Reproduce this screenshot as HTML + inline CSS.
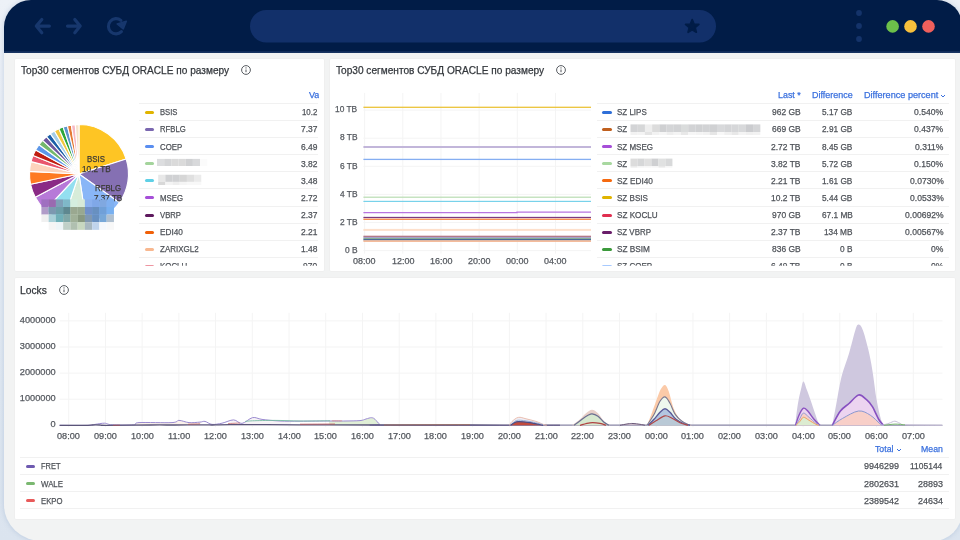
<!DOCTYPE html>
<html><head><meta charset="utf-8">
<style>
*{margin:0;padding:0;box-sizing:border-box}
html,body{width:960px;height:540px;overflow:hidden}
body{position:relative;filter:blur(0.3px);font-family:"Liberation Sans", sans-serif;background:linear-gradient(180deg,#edf1f7 0%,#e3eaf3 45%,#dbe4ef 100%)}
.a{position:absolute}
.frame{position:absolute;left:4px;top:0;width:958px;height:541px;border-radius:27px 25px 29px 38px / 27px 25px 29px 36px;background:#f2f3f3;overflow:hidden;box-shadow:0 0 5px rgba(120,150,190,0.35)}
.bar{position:absolute;left:0;top:0;width:100%;height:53px;background:#011c47}
.panel{position:absolute;background:#fff;border-radius:1px;box-shadow:0 0 0 0.5px #ebecec}
.t{position:absolute;white-space:nowrap;line-height:1;-webkit-text-stroke:0.25px currentColor}
.sep{position:absolute;height:1px;background:#f1f1f1}
.sw{position:absolute;height:3px;border-radius:1.5px}
</style></head><body>
<div class="frame"><div class="bar"></div><div class="a" style="left:0;top:50.5px;width:100%;height:2.5px;background:linear-gradient(180deg,#0e2856,#1b3764)"></div></div>

<svg class="a" style="left:0;top:0" width="960" height="60" viewBox="0 0 960 60">
<g stroke="#17376d" stroke-width="3.2" fill="none" stroke-linecap="round" stroke-linejoin="round">
<path d="M49.4 26.1 H36.5 M41.8 19.5 L36.3 26.1 L41.8 32.7"/>
<path d="M67.5 26.1 H80 M74.8 19.5 L80.2 26.1 L74.8 32.7"/>
<path d="M120.9 20.4 A7.6 7.6 0 1 0 121.4 31.6" stroke-width="3.1"/>
</g>
<path d="M117.2 23.9 L126.3 21.2 L123.3 28.8 Z" fill="#17376d" stroke="#17376d" stroke-width="1.6" stroke-linejoin="round"/>
<rect x="250" y="10" width="466" height="32.5" rx="16.25" fill="#12306a"/>
<path d="M692.20 19.60 L694.02 24.09 L698.86 24.44 L695.15 27.56 L696.31 32.26 L692.20 29.70 L688.09 32.26 L689.25 27.56 L685.54 24.44 L690.38 24.09 Z" fill="#011c47" stroke="#011c47" stroke-width="1.7" stroke-linejoin="round"/>
<circle cx="859" cy="13" r="2.9" fill="#14336a"/>
<circle cx="859" cy="26" r="2.9" fill="#14336a"/>
<circle cx="859" cy="39" r="2.9" fill="#14336a"/>
<circle cx="892.6" cy="26.4" r="6.3" fill="#6cc04a"/>
<circle cx="910.5" cy="26.4" r="6.3" fill="#f8c03c"/>
<circle cx="928.5" cy="26.4" r="6.3" fill="#ef5f5c"/>
</svg>

<div class="panel" style="left:14.5px;top:58.6px;width:309.70px;height:212.60px"></div>
<div class="panel" style="left:329.8px;top:58.6px;width:625.00px;height:212.60px"></div>
<div class="panel" style="left:14.5px;top:277.7px;width:940.30px;height:241.10px"></div>
<div class="t" style="left:20.80px;top:65px;font-size:10.6px;color:#33373c;transform:scaleX(0.9544);transform-origin:0 0;">Top30 сегментов СУБД ORACLE по размеру</div>
<svg class="a" style="left:239.9px;top:63.900000000000006px" width="12" height="12" viewBox="-6 -6 12 12">
<circle cx="0" cy="0" r="4.4" fill="none" stroke="#50545a" stroke-width="0.95"/>
<rect x="-0.5" y="-0.5" width="1" height="2.7" fill="#50545a"/><rect x="-0.55" y="-2.65" width="1.1" height="1.1" rx="0.5" fill="#50545a"/></svg>
<div class="t" style="left:336.00px;top:65px;font-size:10.6px;color:#33373c;transform:scaleX(0.9544);transform-origin:0 0;">Top30 сегментов СУБД ORACLE по размеру</div>
<svg class="a" style="left:555.0px;top:63.900000000000006px" width="12" height="12" viewBox="-6 -6 12 12">
<circle cx="0" cy="0" r="4.4" fill="none" stroke="#50545a" stroke-width="0.95"/>
<rect x="-0.5" y="-0.5" width="1" height="2.7" fill="#50545a"/><rect x="-0.55" y="-2.65" width="1.1" height="1.1" rx="0.5" fill="#50545a"/></svg>
<div class="t" style="left:20.40px;top:285px;font-size:10.6px;color:#33373c;transform:scaleX(0.9687);transform-origin:0 0;">Locks</div>
<svg class="a" style="left:57.6px;top:284.0px" width="12" height="12" viewBox="-6 -6 12 12">
<circle cx="0" cy="0" r="4.4" fill="none" stroke="#50545a" stroke-width="0.95"/>
<rect x="-0.5" y="-0.5" width="1" height="2.7" fill="#50545a"/><rect x="-0.55" y="-2.65" width="1.1" height="1.1" rx="0.5" fill="#50545a"/></svg>
<svg class="a" style="left:0;top:0" width="330" height="280" viewBox="0 0 330 280">
<path d="M79.0 174.0 L79.00 124.50 A49.5 49.5 0 0 1 126.18 159.03 Z" fill="#fec524" stroke="#fff" stroke-width="1.1" stroke-linejoin="round"/>
<path d="M79.0 174.0 L126.18 159.03 A49.5 49.5 0 0 1 119.40 202.60 Z" fill="#8570b3" stroke="#fff" stroke-width="1.1" stroke-linejoin="round"/>
<path d="M79.0 174.0 L119.40 202.60 A49.5 49.5 0 0 1 86.32 222.96 Z" fill="#89b6f7" stroke="#fff" stroke-width="1.1" stroke-linejoin="round"/>
<path d="M79.0 174.0 L86.32 222.96 A49.5 49.5 0 0 1 63.29 220.94 Z" fill="#d7ecd9" stroke="#fff" stroke-width="1.1" stroke-linejoin="round"/>
<path d="M79.0 174.0 L63.29 220.94 A49.5 49.5 0 0 1 45.24 210.20 Z" fill="#93dff0" stroke="#fff" stroke-width="1.1" stroke-linejoin="round"/>
<path d="M79.0 174.0 L45.24 210.20 A49.5 49.5 0 0 1 35.29 197.24 Z" fill="#b779d8" stroke="#fff" stroke-width="1.1" stroke-linejoin="round"/>
<path d="M79.0 174.0 L35.29 197.24 A49.5 49.5 0 0 1 30.58 184.29 Z" fill="#8a2a86" stroke="#fff" stroke-width="1.1" stroke-linejoin="round"/>
<path d="M79.0 174.0 L30.58 184.29 A49.5 49.5 0 0 1 29.57 171.41 Z" fill="#fe7a22" stroke="#fff" stroke-width="1.1" stroke-linejoin="round"/>
<path d="M79.0 174.0 L29.57 171.41 A49.5 49.5 0 0 1 31.08 161.61 Z" fill="#fdd3bd" stroke="#fff" stroke-width="1.1" stroke-linejoin="round"/>
<path d="M79.0 174.0 L31.08 161.61 A49.5 49.5 0 0 1 33.06 155.58 Z" fill="#e9556d" stroke="#fff" stroke-width="1.1" stroke-linejoin="round"/>
<path d="M79.0 174.0 L33.06 155.58 A49.5 49.5 0 0 1 35.73 149.96 Z" fill="#c01d10" stroke="#fff" stroke-width="1.1" stroke-linejoin="round"/>
<path d="M79.0 174.0 L35.73 149.96 A49.5 49.5 0 0 1 39.03 144.80 Z" fill="#5d97e8" stroke="#fff" stroke-width="1.1" stroke-linejoin="round"/>
<path d="M79.0 174.0 L39.03 144.80 A49.5 49.5 0 0 1 42.65 140.40 Z" fill="#74b86c" stroke="#fff" stroke-width="1.1" stroke-linejoin="round"/>
<path d="M79.0 174.0 L42.65 140.40 A49.5 49.5 0 0 1 46.43 136.73 Z" fill="#6e579e" stroke="#fff" stroke-width="1.1" stroke-linejoin="round"/>
<path d="M79.0 174.0 L46.43 136.73 A49.5 49.5 0 0 1 50.29 133.68 Z" fill="#1b5fa8" stroke="#fff" stroke-width="1.1" stroke-linejoin="round"/>
<path d="M79.0 174.0 L50.29 133.68 A49.5 49.5 0 0 1 54.51 130.98 Z" fill="#a3cde8" stroke="#fff" stroke-width="1.1" stroke-linejoin="round"/>
<path d="M79.0 174.0 L54.51 130.98 A49.5 49.5 0 0 1 58.91 128.76 Z" fill="#f2c73f" stroke="#fff" stroke-width="1.1" stroke-linejoin="round"/>
<path d="M79.0 174.0 L58.91 128.76 A49.5 49.5 0 0 1 63.17 127.10 Z" fill="#2ea63b" stroke="#fff" stroke-width="1.1" stroke-linejoin="round"/>
<path d="M79.0 174.0 L63.17 127.10 A49.5 49.5 0 0 1 67.40 125.88 Z" fill="#5c95cc" stroke="#fff" stroke-width="1.1" stroke-linejoin="round"/>
<path d="M79.0 174.0 L67.40 125.88 A49.5 49.5 0 0 1 71.38 125.09 Z" fill="#e57a35" stroke="#fff" stroke-width="1.1" stroke-linejoin="round"/>
<path d="M79.0 174.0 L71.38 125.09 A49.5 49.5 0 0 1 75.29 124.64 Z" fill="#f7b8c4" stroke="#fff" stroke-width="1.1" stroke-linejoin="round"/>
<path d="M79.0 174.0 L75.29 124.64 A49.5 49.5 0 0 1 79.00 124.50 Z" fill="#f7e3cc" stroke="#fff" stroke-width="1.1" stroke-linejoin="round"/>
</svg>
<div class="t" style="left:87.30px;top:155px;font-size:8.8px;color:#3b3a36;transform:scaleX(0.8921);transform-origin:0 0;">BSIS</div>
<div class="t" style="left:82.30px;top:165px;font-size:8.8px;color:#3b3a36;transform:scaleX(0.9358);transform-origin:0 0;">10.2 TB</div>
<div class="t" style="left:94.70px;top:184px;font-size:8.8px;color:#3b3a36;transform:scaleX(0.8859);transform-origin:0 0;">RFBLG</div>
<div class="t" style="left:93.50px;top:194px;font-size:8.8px;color:#3b3a36;transform:scaleX(0.9228);transform-origin:0 0;">7.37 TB</div>
<svg class="a" style="left:0;top:0" width="330" height="280" viewBox="0 0 330 280">
<rect x="41.40" y="199.40" width="7.30" height="7.65" fill="#9f70c0"/>
<rect x="48.65" y="199.40" width="7.30" height="7.65" fill="#9a6ab0"/>
<rect x="55.90" y="199.40" width="7.30" height="7.65" fill="#7fa0b8"/>
<rect x="63.15" y="199.40" width="7.30" height="7.65" fill="#7fb8c8"/>
<rect x="70.40" y="199.40" width="7.30" height="7.65" fill="#d5eedf"/>
<rect x="77.65" y="199.40" width="7.30" height="7.65" fill="#d8ead8"/>
<rect x="84.90" y="199.40" width="7.30" height="7.65" fill="#8ab0ee"/>
<rect x="92.15" y="199.40" width="7.30" height="7.65" fill="#80a8e8"/>
<rect x="99.40" y="199.40" width="7.30" height="7.65" fill="#80a8e0"/>
<rect x="106.65" y="199.40" width="7.30" height="7.65" fill="#80b0f0"/>
<rect x="41.40" y="207.00" width="7.30" height="7.65" fill="#b09cc8"/>
<rect x="48.65" y="207.00" width="7.30" height="7.65" fill="#7c98b0"/>
<rect x="55.90" y="207.00" width="7.30" height="7.65" fill="#6c9ea8"/>
<rect x="63.15" y="207.00" width="7.30" height="7.65" fill="#5e8890"/>
<rect x="70.40" y="207.00" width="7.30" height="7.65" fill="#9aa890"/>
<rect x="77.65" y="207.00" width="7.30" height="7.65" fill="#98a890"/>
<rect x="84.90" y="207.00" width="7.30" height="7.65" fill="#7090c8"/>
<rect x="92.15" y="207.00" width="7.30" height="7.65" fill="#6890c0"/>
<rect x="99.40" y="207.00" width="7.30" height="7.65" fill="#70a0d8"/>
<rect x="106.65" y="207.00" width="7.30" height="7.65" fill="#78b0f0"/>
<rect x="41.40" y="214.60" width="7.30" height="7.65" fill="#f0f0f0"/>
<rect x="48.65" y="214.60" width="7.30" height="7.65" fill="#a8d0d8"/>
<rect x="55.90" y="214.60" width="7.30" height="7.65" fill="#70b0b8"/>
<rect x="63.15" y="214.60" width="7.30" height="7.65" fill="#80a8a8"/>
<rect x="70.40" y="214.60" width="7.30" height="7.65" fill="#a0b098"/>
<rect x="77.65" y="214.60" width="7.30" height="7.65" fill="#889880"/>
<rect x="84.90" y="214.60" width="7.30" height="7.65" fill="#8098b0"/>
<rect x="92.15" y="214.60" width="7.30" height="7.65" fill="#6890c0"/>
<rect x="99.40" y="214.60" width="7.30" height="7.65" fill="#78a8d8"/>
<rect x="106.65" y="214.60" width="7.30" height="7.65" fill="#b0c0d0"/>
<rect x="41.40" y="222.20" width="7.30" height="7.65" fill="#ffffff"/>
<rect x="48.65" y="222.20" width="7.30" height="7.65" fill="#f5f5f5"/>
<rect x="55.90" y="222.20" width="7.30" height="7.65" fill="#eef5f8"/>
<rect x="63.15" y="222.20" width="7.30" height="7.65" fill="#c0d0c8"/>
<rect x="70.40" y="222.20" width="7.30" height="7.65" fill="#b0c0b0"/>
<rect x="77.65" y="222.20" width="7.30" height="7.65" fill="#c8d8c0"/>
<rect x="84.90" y="222.20" width="7.30" height="7.65" fill="#a8b8c0"/>
<rect x="92.15" y="222.20" width="7.30" height="7.65" fill="#c0d4ec"/>
<rect x="99.40" y="222.20" width="7.30" height="7.65" fill="#f5f8fc"/>
<rect x="106.65" y="222.20" width="7.30" height="7.65" fill="#f8f8f8"/>
</svg>
<div class="a" style="left:0;top:0;width:960px;height:540px;clip-path:inset(85px 641px 274.2px 139px)">
<div class="t" style="left:308.90px;top:91px;font-size:9.0px;color:#3a70de;">Value</div>
<div class="sep" style="left:139.4px;top:102.90px;width:178.60px"></div>
<div class="sep" style="left:139.4px;top:120.00px;width:178.60px"></div>
<div class="sep" style="left:139.4px;top:137.10px;width:178.60px"></div>
<div class="sep" style="left:139.4px;top:154.20px;width:178.60px"></div>
<div class="sep" style="left:139.4px;top:171.30px;width:178.60px"></div>
<div class="sep" style="left:139.4px;top:188.40px;width:178.60px"></div>
<div class="sep" style="left:139.4px;top:205.50px;width:178.60px"></div>
<div class="sep" style="left:139.4px;top:222.60px;width:178.60px"></div>
<div class="sep" style="left:139.4px;top:239.70px;width:178.60px"></div>
<div class="sep" style="left:139.4px;top:256.80px;width:178.60px"></div>
<div class="sw" style="left:145px;top:110.95px;width:9px;background:#e0b400"></div>
<div class="t" style="left:159.80px;top:108px;font-size:9.2px;color:#4e5258;transform:scaleX(0.8343);transform-origin:0 0;">BSIS</div>
<div class="t" style="left:301.90px;top:108px;font-size:9.2px;color:#4e5258;transform:scaleX(0.8550);transform-origin:0 0;">10.2</div>
<div class="sw" style="left:145px;top:128.05px;width:9px;background:#7b68b0"></div>
<div class="t" style="left:159.80px;top:125px;font-size:9.2px;color:#4e5258;transform:scaleX(0.8376);transform-origin:0 0;">RFBLG</div>
<div class="t" style="left:300.74px;top:125px;font-size:9.2px;color:#4e5258;transform:scaleX(0.9200);transform-origin:0 0;">7.37</div>
<div class="sw" style="left:145px;top:145.15px;width:9px;background:#5a8ef0"></div>
<div class="t" style="left:159.80px;top:143px;font-size:9.2px;color:#4e5258;transform:scaleX(0.8512);transform-origin:0 0;">COEP</div>
<div class="t" style="left:300.74px;top:143px;font-size:9.2px;color:#4e5258;transform:scaleX(0.9200);transform-origin:0 0;">6.49</div>
<div class="sw" style="left:145px;top:162.25px;width:9px;background:#a4d49c"></div>
<svg class="a" style="left:0;top:0" width="960" height="540"><rect x="157.00" y="158.90" width="7.22" height="7.1" fill="#dcdddf"/><rect x="164.17" y="158.90" width="7.22" height="7.1" fill="#d4d5d7"/><rect x="171.34" y="158.90" width="7.22" height="7.1" fill="#dadada"/><rect x="178.51" y="158.90" width="7.22" height="7.1" fill="#dadada"/><rect x="185.68" y="158.90" width="7.22" height="7.1" fill="#cfd0d2"/><rect x="192.85" y="158.90" width="7.22" height="7.1" fill="#d8d9db"/><rect x="200.02" y="158.90" width="7.22" height="7.1" fill="#fbfbfb"/></svg>
<div class="t" style="left:300.74px;top:160px;font-size:9.2px;color:#4e5258;transform:scaleX(0.9200);transform-origin:0 0;">3.82</div>
<div class="sw" style="left:145px;top:179.35px;width:9px;background:#5fd0e6"></div>
<svg class="a" style="left:0;top:0" width="960" height="540"><rect x="158.20" y="174.75" width="7.22" height="7.15" fill="#e8e8e8"/><rect x="165.37" y="174.75" width="7.22" height="7.15" fill="#d0d1d3"/><rect x="172.54" y="174.75" width="7.22" height="7.15" fill="#d0d1d3"/><rect x="179.71" y="174.75" width="7.22" height="7.15" fill="#d6d6d6"/><rect x="186.88" y="174.75" width="7.22" height="7.15" fill="#e0e0e0"/><rect x="194.05" y="174.75" width="7.22" height="7.15" fill="#ebebeb"/><rect x="158.20" y="181.90" width="7.22" height="3.1" fill="#d8d8d8"/><rect x="165.37" y="181.90" width="7.22" height="3.1" fill="#f4f4f4"/><rect x="172.54" y="181.90" width="7.22" height="3.1" fill="#eeeeee"/><rect x="179.71" y="181.90" width="7.22" height="3.1" fill="#f5f5f5"/><rect x="186.88" y="181.90" width="7.22" height="3.1" fill="#f8f8f8"/><rect x="194.05" y="181.90" width="7.22" height="3.1" fill="#f8f8f8"/></svg>
<div class="t" style="left:300.74px;top:177px;font-size:9.2px;color:#4e5258;transform:scaleX(0.9200);transform-origin:0 0;">3.48</div>
<div class="sw" style="left:145px;top:196.45px;width:9px;background:#a64fd8"></div>
<div class="t" style="left:159.80px;top:194px;font-size:9.2px;color:#4e5258;transform:scaleX(0.8489);transform-origin:0 0;">MSEG</div>
<div class="t" style="left:300.74px;top:194px;font-size:9.2px;color:#4e5258;transform:scaleX(0.9200);transform-origin:0 0;">2.72</div>
<div class="sw" style="left:145px;top:213.55px;width:9px;background:#5e1a5e"></div>
<div class="t" style="left:159.80px;top:211px;font-size:9.2px;color:#4e5258;transform:scaleX(0.8377);transform-origin:0 0;">VBRP</div>
<div class="t" style="left:300.74px;top:211px;font-size:9.2px;color:#4e5258;transform:scaleX(0.9200);transform-origin:0 0;">2.37</div>
<div class="sw" style="left:145px;top:230.65px;width:9px;background:#f06008"></div>
<div class="t" style="left:159.80px;top:228px;font-size:9.2px;color:#4e5258;transform:scaleX(0.8993);transform-origin:0 0;">EDI40</div>
<div class="t" style="left:300.74px;top:228px;font-size:9.2px;color:#4e5258;transform:scaleX(0.9200);transform-origin:0 0;">2.21</div>
<div class="sw" style="left:145px;top:247.75px;width:9px;background:#f8b890"></div>
<div class="t" style="left:159.80px;top:245px;font-size:9.2px;color:#4e5258;transform:scaleX(0.8700);transform-origin:0 0;">ZARIXGL2</div>
<div class="t" style="left:300.74px;top:245px;font-size:9.2px;color:#4e5258;transform:scaleX(0.9200);transform-origin:0 0;">1.48</div>
<div class="sw" style="left:145px;top:264.85px;width:9px;background:#e87080"></div>
<div class="t" style="left:159.80px;top:262px;font-size:9.2px;color:#4e5258;transform:scaleX(0.8600);transform-origin:0 0;">KOCLU</div>
<div class="t" style="left:303.07px;top:262px;font-size:9.2px;color:#4e5258;transform:scaleX(0.9200);transform-origin:0 0;">970</div>
</div>
<svg class="a" style="left:0;top:0" width="960" height="540" viewBox="0 0 960 540">
<rect x="363.4" y="250.10" width="227.6" height="1" fill="#f4f4f4"/>
<rect x="363.4" y="222.00" width="227.6" height="1" fill="#f4f4f4"/>
<rect x="363.4" y="193.90" width="227.6" height="1" fill="#f4f4f4"/>
<rect x="363.4" y="165.80" width="227.6" height="1" fill="#f4f4f4"/>
<rect x="363.4" y="137.70" width="227.6" height="1" fill="#f4f4f4"/>
<rect x="363.4" y="109.60" width="227.6" height="1" fill="#f4f4f4"/>
<rect x="364.10" y="92.9" width="1" height="160.70" fill="#f4f4f4"/>
<rect x="402.28" y="92.9" width="1" height="160.70" fill="#f4f4f4"/>
<rect x="440.46" y="92.9" width="1" height="160.70" fill="#f4f4f4"/>
<rect x="478.64" y="92.9" width="1" height="160.70" fill="#f4f4f4"/>
<rect x="516.82" y="92.9" width="1" height="160.70" fill="#f4f4f4"/>
<rect x="555.00" y="92.9" width="1" height="160.70" fill="#f4f4f4"/>
<rect x="363.4" y="106.65" width="227.6" height="1.3" fill="#ecc43a"/>
<rect x="363.4" y="146.10" width="227.6" height="1.8" fill="#bcaed6"/>
<rect x="363.4" y="158.75" width="227.6" height="1.3" fill="#85aef2"/>
<rect x="363.4" y="196.60" width="227.6" height="1.2" fill="#b9dcb2"/>
<rect x="363.4" y="200.80" width="227.6" height="1.2" fill="#78d2ea"/>
<rect x="363.4" y="216.85" width="227.6" height="1.3" fill="#7c3a80"/>
<rect x="363.4" y="218.65" width="227.6" height="1.3" fill="#f78a48"/>
<rect x="363.4" y="228.90" width="227.6" height="2.0" fill="#fde0cc"/>
<rect x="363.4" y="235.70" width="227.6" height="1.4" fill="#b37684"/>
<rect x="363.4" y="236.95" width="227.6" height="1.3" fill="#aaa2cc"/>
<rect x="363.4" y="237.95" width="227.6" height="1.3" fill="#8bb394"/>
<rect x="363.4" y="238.95" width="227.6" height="1.5" fill="#4c6a9a"/>
<rect x="363.4" y="240.30" width="227.6" height="1.6" fill="#f3b592"/>
<path d="M363.4 212.7 H517 V212.2 H591" stroke="#b874e0" stroke-width="1.3" fill="none"/>
</svg>
<div class="t" style="left:335.15px;top:105px;font-size:8.8px;color:#55595f;transform:scaleX(0.9500);transform-origin:0 0;">10 TB</div>
<div class="t" style="left:339.79px;top:133px;font-size:8.8px;color:#55595f;transform:scaleX(0.9500);transform-origin:0 0;">8 TB</div>
<div class="t" style="left:339.79px;top:162px;font-size:8.8px;color:#55595f;transform:scaleX(0.9500);transform-origin:0 0;">6 TB</div>
<div class="t" style="left:339.79px;top:190px;font-size:8.8px;color:#55595f;transform:scaleX(0.9500);transform-origin:0 0;">4 TB</div>
<div class="t" style="left:339.79px;top:218px;font-size:8.8px;color:#55595f;transform:scaleX(0.9500);transform-origin:0 0;">2 TB</div>
<div class="t" style="left:344.76px;top:246px;font-size:8.8px;color:#55595f;transform:scaleX(0.9500);transform-origin:0 0;">0 B</div>
<div class="t" style="left:353.36px;top:257px;font-size:8.8px;color:#55595f;transform:scaleX(1.0200);transform-origin:0 0;">08:00</div>
<div class="t" style="left:391.54px;top:257px;font-size:8.8px;color:#55595f;transform:scaleX(1.0200);transform-origin:0 0;">12:00</div>
<div class="t" style="left:429.72px;top:257px;font-size:8.8px;color:#55595f;transform:scaleX(1.0200);transform-origin:0 0;">16:00</div>
<div class="t" style="left:467.90px;top:257px;font-size:8.8px;color:#55595f;transform:scaleX(1.0200);transform-origin:0 0;">20:00</div>
<div class="t" style="left:506.08px;top:257px;font-size:8.8px;color:#55595f;transform:scaleX(1.0200);transform-origin:0 0;">00:00</div>
<div class="t" style="left:544.26px;top:257px;font-size:8.8px;color:#55595f;transform:scaleX(1.0200);transform-origin:0 0;">04:00</div>
<div class="a" style="left:0;top:0;width:960px;height:540px;clip-path:inset(85px 10px 274.2px 596px)">
<div class="sep" style="left:597px;top:102.90px;width:351.50px"></div>
<div class="sep" style="left:597px;top:120.00px;width:351.50px"></div>
<div class="sep" style="left:597px;top:137.10px;width:351.50px"></div>
<div class="sep" style="left:597px;top:154.20px;width:351.50px"></div>
<div class="sep" style="left:597px;top:171.30px;width:351.50px"></div>
<div class="sep" style="left:597px;top:188.40px;width:351.50px"></div>
<div class="sep" style="left:597px;top:205.50px;width:351.50px"></div>
<div class="sep" style="left:597px;top:222.60px;width:351.50px"></div>
<div class="sep" style="left:597px;top:239.70px;width:351.50px"></div>
<div class="sep" style="left:597px;top:256.80px;width:351.50px"></div>
<div class="t" style="left:777.80px;top:91px;font-size:9.0px;color:#3a70de;transform:scaleX(0.9872);transform-origin:0 0;">Last *</div>
<div class="t" style="left:812.10px;top:91px;font-size:9.0px;color:#3a70de;transform:scaleX(0.9961);transform-origin:0 0;">Difference</div>
<div class="t" style="left:863.80px;top:91px;font-size:9.0px;color:#3a70de;transform:scaleX(1.0123);transform-origin:0 0;">Difference percent</div>
<svg class="a" style="left:939.5px;top:92.5px" width="6" height="6" viewBox="0 0 6 6"><path d="M1.0 2.0 L3 4.0 L5.0 2.0" stroke="#3a70de" stroke-width="1.0" fill="none"/></svg>
<div class="sw" style="left:602px;top:110.95px;width:10px;background:#2f6fd8"></div>
<div class="t" style="left:617.00px;top:108px;font-size:9.2px;color:#4e5258;transform:scaleX(0.8696);transform-origin:0 0;">SZ LIPS</div>
<div class="t" style="left:771.91px;top:108px;font-size:9.2px;color:#4e5258;transform:scaleX(0.9200);transform-origin:0 0;">962 GB</div>
<div class="t" style="left:822.31px;top:108px;font-size:9.2px;color:#4e5258;transform:scaleX(0.9000);transform-origin:0 0;">5.17 GB</div>
<div class="t" style="left:914.30px;top:108px;font-size:9.2px;color:#4e5258;transform:scaleX(0.9300);transform-origin:0 0;">0.540%</div>
<div class="sw" style="left:602px;top:128.05px;width:10px;background:#c0601e"></div>
<div class="t" style="left:617.00px;top:125px;font-size:9.2px;color:#4e5258;transform:scaleX(0.8700);transform-origin:0 0;">SZ</div>
<svg class="a" style="left:0;top:0" width="960" height="540"><rect x="630.50" y="124.40" width="7.26" height="7.6" fill="#d3d4d6"/><rect x="637.71" y="124.40" width="7.26" height="7.6" fill="#d6d7d8"/><rect x="644.92" y="124.40" width="7.26" height="7.6" fill="#eeeeee"/><rect x="652.13" y="124.40" width="7.26" height="7.6" fill="#dcdcdc"/><rect x="659.34" y="124.40" width="7.26" height="7.6" fill="#cfd0d2"/><rect x="666.55" y="124.40" width="7.26" height="7.6" fill="#d4d5d7"/><rect x="673.76" y="124.40" width="7.26" height="7.6" fill="#d2d3d5"/><rect x="680.97" y="124.40" width="7.26" height="7.6" fill="#dadcdc"/><rect x="688.18" y="124.40" width="7.26" height="7.6" fill="#d2d3d5"/><rect x="695.39" y="124.40" width="7.26" height="7.6" fill="#d0d1d3"/><rect x="702.60" y="124.40" width="7.26" height="7.6" fill="#d2d3d5"/><rect x="709.81" y="124.40" width="7.26" height="7.6" fill="#d0d1d3"/><rect x="717.02" y="124.40" width="7.26" height="7.6" fill="#d8d9db"/><rect x="724.23" y="124.40" width="7.26" height="7.6" fill="#d4d5d7"/><rect x="731.44" y="124.40" width="7.26" height="7.6" fill="#d6d7d9"/><rect x="738.65" y="124.40" width="7.26" height="7.6" fill="#d8d9db"/><rect x="745.86" y="124.40" width="7.26" height="7.6" fill="#cbcccf"/><rect x="753.07" y="124.40" width="7.26" height="7.6" fill="#d4d5d7"/><rect x="630.50" y="132.00" width="7.26" height="3.0" fill="#f2f2f2"/><rect x="637.71" y="132.00" width="7.26" height="3.0" fill="#f4f4f4"/><rect x="644.92" y="132.00" width="7.26" height="3.0" fill="#e4e4e4"/><rect x="652.13" y="132.00" width="7.26" height="3.0" fill="#f2f2f2"/><rect x="659.34" y="132.00" width="7.26" height="3.0" fill="#f6f6f6"/><rect x="666.55" y="132.00" width="7.26" height="3.0" fill="#eeeeee"/><rect x="673.76" y="132.00" width="7.26" height="3.0" fill="#f4f4f4"/><rect x="680.97" y="132.00" width="7.26" height="3.0" fill="#e8e8e8"/><rect x="688.18" y="132.00" width="7.26" height="3.0" fill="#f6f6f6"/><rect x="695.39" y="132.00" width="7.26" height="3.0" fill="#f4f4f4"/><rect x="702.60" y="132.00" width="7.26" height="3.0" fill="#f2f2f2"/><rect x="709.81" y="132.00" width="7.26" height="3.0" fill="#e6e6e6"/><rect x="717.02" y="132.00" width="7.26" height="3.0" fill="#f8f8f8"/><rect x="724.23" y="132.00" width="7.26" height="3.0" fill="#f0f0f0"/><rect x="731.44" y="132.00" width="7.26" height="3.0" fill="#e8e8e8"/><rect x="738.65" y="132.00" width="7.26" height="3.0" fill="#f4f4f4"/><rect x="745.86" y="132.00" width="7.26" height="3.0" fill="#f0f0f0"/><rect x="753.07" y="132.00" width="7.26" height="3.0" fill="#f2f2f2"/></svg>
<div class="t" style="left:771.91px;top:125px;font-size:9.2px;color:#4e5258;transform:scaleX(0.9200);transform-origin:0 0;">669 GB</div>
<div class="t" style="left:822.31px;top:125px;font-size:9.2px;color:#4e5258;transform:scaleX(0.9000);transform-origin:0 0;">2.91 GB</div>
<div class="t" style="left:914.30px;top:125px;font-size:9.2px;color:#4e5258;transform:scaleX(0.9300);transform-origin:0 0;">0.437%</div>
<div class="sw" style="left:602px;top:145.15px;width:10px;background:#a64fd8"></div>
<div class="t" style="left:617.00px;top:143px;font-size:9.2px;color:#4e5258;transform:scaleX(0.8696);transform-origin:0 0;">SZ MSEG</div>
<div class="t" style="left:771.10px;top:143px;font-size:9.2px;color:#4e5258;transform:scaleX(0.9200);transform-origin:0 0;">2.72 TB</div>
<div class="t" style="left:822.31px;top:143px;font-size:9.2px;color:#4e5258;transform:scaleX(0.9000);transform-origin:0 0;">8.45 GB</div>
<div class="t" style="left:914.94px;top:143px;font-size:9.2px;color:#4e5258;transform:scaleX(0.9300);transform-origin:0 0;">0.311%</div>
<div class="sw" style="left:602px;top:162.25px;width:10px;background:#a8d8a0"></div>
<div class="t" style="left:617.00px;top:160px;font-size:9.2px;color:#4e5258;transform:scaleX(0.8700);transform-origin:0 0;">SZ</div>
<svg class="a" style="left:0;top:0" width="960" height="540"><rect x="630.50" y="158.60" width="7.03" height="7.4" fill="#dcdcdc"/><rect x="637.48" y="158.60" width="7.03" height="7.4" fill="#d6d7d8"/><rect x="644.46" y="158.60" width="7.03" height="7.4" fill="#e0e0e0"/><rect x="651.44" y="158.60" width="7.03" height="7.4" fill="#cfd0d2"/><rect x="658.42" y="158.60" width="7.03" height="7.4" fill="#e0e1e1"/><rect x="665.40" y="158.60" width="7.03" height="7.4" fill="#d8d9da"/><rect x="630.50" y="166.00" width="7.03" height="1.6" fill="#eaeaea"/><rect x="637.48" y="166.00" width="7.03" height="1.6" fill="#f4f4f4"/><rect x="644.46" y="166.00" width="7.03" height="1.6" fill="#f6f6f6"/><rect x="651.44" y="166.00" width="7.03" height="1.6" fill="#f6f6f6"/><rect x="658.42" y="166.00" width="7.03" height="1.6" fill="#e8e8e8"/><rect x="665.40" y="166.00" width="7.03" height="1.6" fill="#f6f6f6"/></svg>
<div class="t" style="left:771.10px;top:160px;font-size:9.2px;color:#4e5258;transform:scaleX(0.9200);transform-origin:0 0;">3.82 TB</div>
<div class="t" style="left:822.31px;top:160px;font-size:9.2px;color:#4e5258;transform:scaleX(0.9000);transform-origin:0 0;">5.72 GB</div>
<div class="t" style="left:914.30px;top:160px;font-size:9.2px;color:#4e5258;transform:scaleX(0.9300);transform-origin:0 0;">0.150%</div>
<div class="sw" style="left:602px;top:179.35px;width:10px;background:#f56a10"></div>
<div class="t" style="left:617.00px;top:177px;font-size:9.2px;color:#4e5258;transform:scaleX(0.9027);transform-origin:0 0;">SZ EDI40</div>
<div class="t" style="left:771.10px;top:177px;font-size:9.2px;color:#4e5258;transform:scaleX(0.9200);transform-origin:0 0;">2.21 TB</div>
<div class="t" style="left:822.31px;top:177px;font-size:9.2px;color:#4e5258;transform:scaleX(0.9000);transform-origin:0 0;">1.61 GB</div>
<div class="t" style="left:909.50px;top:177px;font-size:9.2px;color:#4e5258;transform:scaleX(0.9300);transform-origin:0 0;">0.0730%</div>
<div class="sw" style="left:602px;top:196.45px;width:10px;background:#e0b400"></div>
<div class="t" style="left:617.00px;top:194px;font-size:9.2px;color:#4e5258;transform:scaleX(0.8758);transform-origin:0 0;">SZ BSIS</div>
<div class="t" style="left:771.10px;top:194px;font-size:9.2px;color:#4e5258;transform:scaleX(0.9200);transform-origin:0 0;">10.2 TB</div>
<div class="t" style="left:822.31px;top:194px;font-size:9.2px;color:#4e5258;transform:scaleX(0.9000);transform-origin:0 0;">5.44 GB</div>
<div class="t" style="left:909.50px;top:194px;font-size:9.2px;color:#4e5258;transform:scaleX(0.9300);transform-origin:0 0;">0.0533%</div>
<div class="sw" style="left:602px;top:213.55px;width:10px;background:#e02f50"></div>
<div class="t" style="left:617.00px;top:211px;font-size:9.2px;color:#4e5258;transform:scaleX(0.8870);transform-origin:0 0;">SZ KOCLU</div>
<div class="t" style="left:771.91px;top:211px;font-size:9.2px;color:#4e5258;transform:scaleX(0.9200);transform-origin:0 0;">970 GB</div>
<div class="t" style="left:821.86px;top:211px;font-size:9.2px;color:#4e5258;transform:scaleX(0.9000);transform-origin:0 0;">67.1 MB</div>
<div class="t" style="left:904.76px;top:211px;font-size:9.2px;color:#4e5258;transform:scaleX(0.9300);transform-origin:0 0;">0.00692%</div>
<div class="sw" style="left:602px;top:230.65px;width:10px;background:#6a1e6a"></div>
<div class="t" style="left:617.00px;top:228px;font-size:9.2px;color:#4e5258;transform:scaleX(0.8635);transform-origin:0 0;">SZ VBRP</div>
<div class="t" style="left:771.10px;top:228px;font-size:9.2px;color:#4e5258;transform:scaleX(0.9200);transform-origin:0 0;">2.37 TB</div>
<div class="t" style="left:824.18px;top:228px;font-size:9.2px;color:#4e5258;transform:scaleX(0.9000);transform-origin:0 0;">134 MB</div>
<div class="t" style="left:904.76px;top:228px;font-size:9.2px;color:#4e5258;transform:scaleX(0.9300);transform-origin:0 0;">0.00567%</div>
<div class="sw" style="left:602px;top:247.75px;width:10px;background:#3c9a3c"></div>
<div class="t" style="left:617.00px;top:245px;font-size:9.2px;color:#4e5258;transform:scaleX(0.8967);transform-origin:0 0;">SZ BSIM</div>
<div class="t" style="left:771.91px;top:245px;font-size:9.2px;color:#4e5258;transform:scaleX(0.9200);transform-origin:0 0;">836 GB</div>
<div class="t" style="left:840.28px;top:245px;font-size:9.2px;color:#4e5258;transform:scaleX(0.9000);transform-origin:0 0;">0 B</div>
<div class="t" style="left:930.94px;top:245px;font-size:9.2px;color:#4e5258;transform:scaleX(0.9300);transform-origin:0 0;">0%</div>
<div class="sw" style="left:602px;top:264.85px;width:10px;background:#8ab8ff"></div>
<div class="t" style="left:617.00px;top:262px;font-size:9.2px;color:#4e5258;transform:scaleX(0.8700);transform-origin:0 0;">SZ COEP</div>
<div class="t" style="left:771.10px;top:262px;font-size:9.2px;color:#4e5258;transform:scaleX(0.9200);transform-origin:0 0;">6.49 TB</div>
<div class="t" style="left:840.28px;top:262px;font-size:9.2px;color:#4e5258;transform:scaleX(0.9000);transform-origin:0 0;">0 B</div>
<div class="t" style="left:930.94px;top:262px;font-size:9.2px;color:#4e5258;transform:scaleX(0.9300);transform-origin:0 0;">0%</div>
</div>
<svg class="a" style="left:0;top:0" width="960" height="540" viewBox="0 0 960 540">
<rect x="59.6" y="424.80" width="882.9" height="1" fill="#f4f4f4"/>
<rect x="59.6" y="398.70" width="882.9" height="1" fill="#f4f4f4"/>
<rect x="59.6" y="372.60" width="882.9" height="1" fill="#f4f4f4"/>
<rect x="59.6" y="346.50" width="882.9" height="1" fill="#f4f4f4"/>
<rect x="59.6" y="320.40" width="882.9" height="1" fill="#f4f4f4"/>
<rect x="68.20" y="312.8" width="1" height="114.50" fill="#f4f4f4"/>
<rect x="104.92" y="312.8" width="1" height="114.50" fill="#f4f4f4"/>
<rect x="141.64" y="312.8" width="1" height="114.50" fill="#f4f4f4"/>
<rect x="178.36" y="312.8" width="1" height="114.50" fill="#f4f4f4"/>
<rect x="215.08" y="312.8" width="1" height="114.50" fill="#f4f4f4"/>
<rect x="251.80" y="312.8" width="1" height="114.50" fill="#f4f4f4"/>
<rect x="288.52" y="312.8" width="1" height="114.50" fill="#f4f4f4"/>
<rect x="325.24" y="312.8" width="1" height="114.50" fill="#f4f4f4"/>
<rect x="361.96" y="312.8" width="1" height="114.50" fill="#f4f4f4"/>
<rect x="398.68" y="312.8" width="1" height="114.50" fill="#f4f4f4"/>
<rect x="435.40" y="312.8" width="1" height="114.50" fill="#f4f4f4"/>
<rect x="472.12" y="312.8" width="1" height="114.50" fill="#f4f4f4"/>
<rect x="508.84" y="312.8" width="1" height="114.50" fill="#f4f4f4"/>
<rect x="545.56" y="312.8" width="1" height="114.50" fill="#f4f4f4"/>
<rect x="582.28" y="312.8" width="1" height="114.50" fill="#f4f4f4"/>
<rect x="619.00" y="312.8" width="1" height="114.50" fill="#f4f4f4"/>
<rect x="655.72" y="312.8" width="1" height="114.50" fill="#f4f4f4"/>
<rect x="692.44" y="312.8" width="1" height="114.50" fill="#f4f4f4"/>
<rect x="729.16" y="312.8" width="1" height="114.50" fill="#f4f4f4"/>
<rect x="765.88" y="312.8" width="1" height="114.50" fill="#f4f4f4"/>
<rect x="802.60" y="312.8" width="1" height="114.50" fill="#f4f4f4"/>
<rect x="839.32" y="312.8" width="1" height="114.50" fill="#f4f4f4"/>
<rect x="876.04" y="312.8" width="1" height="114.50" fill="#f4f4f4"/>
<rect x="912.76" y="312.8" width="1" height="114.50" fill="#f4f4f4"/>
<path d="M133.0 425.3 C134.0 424.9 136.2 423.2 139.0 422.8 C141.8 422.4 144.5 422.6 150.0 422.6 C155.5 422.6 167.2 422.9 172.0 422.6 C176.8 422.3 176.2 420.6 179.0 420.6 C181.8 420.6 185.5 422.5 189.0 422.8 C192.5 423.1 198.2 421.9 200.0 422.3 C201.8 422.7 200.0 424.8 200.0 425.3 Z" fill="#fbf1ea" fill-opacity="1.0" stroke="none"/>
<path d="M225.0 425.3 C226.4 424.4 230.8 420.5 233.6 420.2 C236.4 419.9 238.8 424.0 242.0 423.6 C245.2 423.2 249.3 418.5 252.6 417.8 C255.9 417.1 258.3 419.0 262.0 419.5 C265.7 420.0 270.3 420.5 275.0 420.8 C279.7 421.1 287.5 420.8 290.0 421.5 C292.5 422.2 290.0 424.7 290.0 425.3 Z" fill="#f6f2f6" fill-opacity="1.0" stroke="none"/>
<path d="M330.0 425.3 C330.0 424.6 327.5 421.8 330.0 421.1 C332.5 420.4 340.0 421.1 345.0 421.0 C350.0 420.9 356.5 421.1 360.0 420.8 C363.5 420.5 364.1 419.7 366.0 419.2 C367.9 418.7 370.1 417.8 371.6 417.9 C373.1 417.9 373.7 418.4 375.0 419.5 C376.3 420.6 378.6 423.2 379.6 424.2 C380.6 425.2 380.8 425.1 381.0 425.3 Z" fill="#e0efd6" fill-opacity="1.0" stroke="none"/>
<path d="M59.6 425.3 C64.3 425.3 82.1 425.5 88.0 425.3 C93.9 425.1 92.2 424.8 95.0 424.4 C97.8 424.0 101.9 423.1 104.7 423.2 C107.5 423.3 107.2 424.5 112.0 424.8 C116.8 425.1 129.1 425.3 133.6 424.9 C138.1 424.5 132.6 423.0 139.0 422.6 C145.4 422.2 165.3 423.0 172.0 422.6 C178.7 422.2 176.2 420.4 179.0 420.4 C181.8 420.4 185.5 422.3 189.0 422.6 C192.5 422.9 197.3 422.3 200.0 422.1 C202.7 421.9 203.0 421.0 205.0 421.4 C207.0 421.8 209.2 424.1 212.0 424.4 C214.8 424.7 218.4 423.9 222.0 423.2 C225.6 422.4 230.3 419.9 233.6 419.9 C236.9 419.9 238.8 423.8 242.0 423.4 C245.2 423.0 249.3 418.3 252.6 417.6 C255.9 416.9 257.4 418.8 262.0 419.4 C266.6 420.0 273.7 420.7 280.0 421.0 C286.3 421.3 291.7 421.2 300.0 421.2 C308.3 421.2 322.5 421.0 330.0 421.0 C337.5 421.0 340.0 421.1 345.0 421.0 C350.0 420.9 356.5 420.9 360.0 420.6 C363.5 420.3 364.1 419.5 366.0 419.0 C367.9 418.5 370.1 417.6 371.6 417.7 C373.1 417.8 373.7 418.2 375.0 419.3 C376.3 420.4 378.1 423.2 379.6 424.2 C381.1 425.2 353.9 425.1 384.0 425.3 C414.1 425.5 530.7 425.3 560.0 425.3" fill="none" stroke="#9a8ad0" stroke-width="1.0" stroke-opacity="1.0"/>
<path d="M59.6 425.3 C64.3 425.3 82.6 425.4 88.0 425.3 C93.4 425.2 90.0 425.1 92.0 425.0 C94.0 424.9 97.7 424.9 100.0 425.0 C102.3 425.1 97.7 425.3 106.0 425.3 C114.3 425.3 138.5 425.1 150.0 425.0 C161.5 424.9 165.8 425.0 175.0 425.0 C184.2 425.0 198.8 424.8 205.0 424.8 C211.2 424.8 207.8 425.0 212.0 425.0 C216.2 425.0 215.3 424.6 230.0 424.6 C244.7 424.6 283.3 424.8 300.0 424.8 C316.7 424.9 316.7 424.9 330.0 424.9 C343.3 424.9 356.7 425.0 380.0 425.0 C403.3 425.0 440.0 425.0 470.0 425.0 C500.0 425.0 545.0 425.1 560.0 425.1" fill="none" stroke="#5a5478" stroke-width="1.3" stroke-opacity="1.0"/>
<path d="M560.0 425.1 C623.8 425.1 878.8 425.2 942.5 425.2" fill="none" stroke="#8a88a8" stroke-width="1.1" stroke-opacity="1.0"/>
<path d="M245.0 421.5 C246.3 421.4 247.6 421.0 252.6 420.8 C257.6 420.6 267.1 420.4 275.0 420.4 C282.9 420.4 290.8 420.9 300.0 421.0 C309.2 421.1 325.0 420.8 330.0 420.8" fill="none" stroke="#78bca2" stroke-width="1.0" stroke-opacity="0.9"/>
<path d="M113.0 425.3 C114.2 425.3 118.8 425.2 120.0 425.2" fill="none" stroke="#c04a4a" stroke-width="1.0" stroke-opacity="0.6"/>
<path d="M188.0 424.2 C190.0 424.1 198.0 423.9 200.0 423.8" fill="none" stroke="#c04a4a" stroke-width="1.0" stroke-opacity="0.6"/>
<path d="M228.0 423.6 C230.0 423.5 238.0 423.1 240.0 423.0" fill="none" stroke="#c04a4a" stroke-width="1.0" stroke-opacity="0.6"/>
<path d="M332.0 420.8 C333.7 420.8 340.3 420.8 342.0 420.8" fill="none" stroke="#d87a7a" stroke-width="1.0" stroke-opacity="0.6"/>
<path d="M300.0 424.2 C305.8 424.2 329.2 424.0 335.0 424.0" fill="none" stroke="#c04a4a" stroke-width="0.9" stroke-opacity="0.8"/>
<path d="M384.0 425.0 C390.0 425.0 405.7 424.9 420.0 424.8 C434.3 424.8 461.7 424.7 470.0 424.7" fill="none" stroke="#b07050" stroke-width="1.0" stroke-opacity="0.7"/>
<path d="M509.5 425.3 C509.9 424.7 510.5 422.8 512.0 421.5 C513.5 420.2 516.0 417.8 518.3 417.4 C520.6 416.9 523.0 418.1 526.0 418.8 C529.0 419.5 533.1 420.5 536.0 421.4 C538.9 422.3 541.5 423.8 543.3 424.4 C545.1 425.0 546.4 425.1 547.0 425.3 Z" fill="#f1eef4" fill-opacity="1.0" stroke="none"/>
<path d="M509.5 425.3 C509.9 424.7 510.5 422.8 512.0 421.5 C513.5 420.2 516.0 417.8 518.3 417.4 C520.6 416.9 523.0 418.1 526.0 418.8 C529.0 419.5 533.1 420.5 536.0 421.4 C538.9 422.3 541.5 423.8 543.3 424.4 C545.1 425.0 546.4 425.1 547.0 425.3" fill="none" stroke="#e8b8a8" stroke-width="0.9"/>
<path d="M510.5 425.3 C511.0 424.8 512.2 423.2 513.5 422.4 C514.8 421.5 515.5 420.3 518.3 420.2 C521.0 420.1 525.9 420.8 530.0 421.5 C534.1 422.2 540.8 424.1 543.0 424.6" fill="none" stroke="#9ab0d8" stroke-width="1.0" stroke-opacity="1.0"/>
<path d="M510.5 425.3 C511.0 424.9 512.2 423.8 513.5 423.2 C514.8 422.6 515.5 421.7 518.3 421.6 C521.0 421.5 525.9 422.0 530.0 422.6 C534.1 423.2 540.8 424.9 543.0 425.3 Z" fill="#c24a3c" fill-opacity="1.0" stroke="none"/>
<path d="M510.5 425.3 C511.0 424.9 512.2 423.8 513.5 423.2 C514.8 422.6 515.5 421.7 518.3 421.6 C521.0 421.5 525.9 422.0 530.0 422.6 C534.1 423.2 540.8 424.9 543.0 425.3" fill="none" stroke="#4a4e88" stroke-width="1.2"/>
<path d="M572.0 425.3 C573.3 424.3 577.7 421.3 580.0 419.3 C582.3 417.3 584.0 414.9 586.0 413.3 C588.0 411.7 590.0 409.7 592.0 409.7 C594.0 409.7 596.0 411.4 598.0 413.3 C600.0 415.2 602.0 419.3 604.0 421.3 C606.0 423.3 609.0 424.6 610.0 425.3 Z" fill="#e8cfc8" fill-opacity="1.0" stroke="none"/>
<path d="M574.0 425.3 C575.3 424.3 579.7 421.0 582.0 419.3 C584.3 417.6 586.3 416.2 588.0 415.3 C589.7 414.4 590.4 413.6 592.1 413.8 C593.8 414.0 596.0 414.9 598.0 416.3 C600.0 417.7 602.2 420.8 604.0 422.3 C605.8 423.8 608.2 424.8 609.0 425.3 Z" fill="#d7e8cf" fill-opacity="1.0" stroke="none"/>
<path d="M574.0 425.3 C575.3 424.3 579.7 421.0 582.0 419.3 C584.3 417.6 586.3 416.2 588.0 415.3 C589.7 414.4 590.4 413.6 592.1 413.8 C593.8 414.0 596.0 414.9 598.0 416.3 C600.0 417.7 602.2 420.8 604.0 422.3 C605.8 423.8 608.2 424.8 609.0 425.3" fill="none" stroke="#6a6e90" stroke-width="1.2"/>
<path d="M580.0 425.3 C581.7 424.9 586.7 423.1 590.0 422.8 C593.3 422.5 597.3 422.9 600.0 423.3 C602.7 423.7 605.0 425.0 606.0 425.3" fill="none" stroke="#b04040" stroke-width="1.2" stroke-opacity="1.0"/>
<path d="M620.0 425.3 C621.3 425.1 625.8 424.1 628.0 423.8 C630.2 423.5 631.0 423.4 633.0 423.5 C635.0 423.6 638.0 424.0 640.0 424.3 C642.0 424.6 644.2 425.1 645.0 425.3 Z" fill="#c8b8c8" fill-opacity="1.0" stroke="none"/>
<path d="M620.0 425.3 C621.3 425.1 625.8 424.1 628.0 423.8 C630.2 423.5 631.0 423.4 633.0 423.5 C635.0 423.6 638.0 424.0 640.0 424.3 C642.0 424.6 644.2 425.1 645.0 425.3" fill="none" stroke="#6a5878" stroke-width="1.0"/>
<path d="M647.0 425.3 C647.7 423.6 649.7 418.8 651.0 415.3 C652.3 411.8 653.4 408.6 655.0 404.3 C656.6 400.0 658.9 392.8 660.6 389.6 C662.3 386.4 663.7 384.7 665.0 384.9 C666.3 385.1 667.1 387.1 668.6 391.0 C670.1 394.9 671.9 403.9 673.7 408.5 C675.5 413.1 677.6 416.2 679.6 418.8 C681.6 421.4 683.9 422.7 686.0 423.8 C688.1 424.9 691.0 425.1 692.0 425.3 Z" fill="#fbcaa8" fill-opacity="1.0" stroke="none"/>
<path d="M647.0 425.3 C647.7 424.3 649.7 421.4 651.0 419.3 C652.3 417.2 653.3 415.9 654.8 412.9 C656.3 409.9 658.3 404.0 660.0 401.3 C661.7 398.6 663.3 396.6 665.0 396.9 C666.7 397.2 668.3 400.4 670.0 403.3 C671.7 406.2 673.2 411.4 675.2 414.4 C677.2 417.4 679.5 419.5 682.0 421.3 C684.5 423.1 688.7 424.6 690.0 425.3 Z" fill="#eef8ee" fill-opacity="1.0" stroke="none"/>
<path d="M647.0 425.3 C647.7 424.3 649.7 421.4 651.0 419.3 C652.3 417.2 653.3 415.9 654.8 412.9 C656.3 409.9 658.3 404.0 660.0 401.3 C661.7 398.6 663.3 396.6 665.0 396.9 C666.7 397.2 668.3 400.4 670.0 403.3 C671.7 406.2 673.2 411.4 675.2 414.4 C677.2 417.4 679.5 419.5 682.0 421.3 C684.5 423.1 688.7 424.6 690.0 425.3" fill="none" stroke="#7a7890" stroke-width="1.1"/>
<path d="M648.0 425.3 C649.0 424.3 652.0 421.5 654.0 419.3 C656.0 417.1 658.2 414.1 660.0 412.3 C661.8 410.6 663.3 408.8 665.0 408.8 C666.7 408.8 668.2 410.6 670.0 412.3 C671.8 414.1 673.7 417.4 676.0 419.3 C678.3 421.2 681.7 422.8 684.0 423.8 C686.3 424.8 689.0 425.1 690.0 425.3 Z" fill="#b3c6e0" fill-opacity="1.0" stroke="none"/>
<path d="M648.0 425.3 C649.0 424.3 652.0 421.5 654.0 419.3 C656.0 417.1 658.2 414.1 660.0 412.3 C661.8 410.6 663.3 408.8 665.0 408.8 C666.7 408.8 668.2 410.6 670.0 412.3 C671.8 414.1 673.7 417.4 676.0 419.3 C678.3 421.2 681.7 422.8 684.0 423.8 C686.3 424.8 689.0 425.1 690.0 425.3" fill="none" stroke="#5a5a98" stroke-width="1.4"/>
<path d="M649.0 425.3 C650.2 424.6 653.3 422.4 656.0 420.8 C658.7 419.2 662.3 416.2 665.0 415.8 C667.7 415.4 669.5 417.1 672.0 418.3 C674.5 419.5 677.3 421.6 680.0 422.8 C682.7 424.0 686.7 424.9 688.0 425.3 Z" fill="#b9c9d6" fill-opacity="1.0" stroke="none"/>
<path d="M649.0 425.3 C650.2 424.6 653.3 422.4 656.0 420.8 C658.7 419.2 662.3 416.2 665.0 415.8 C667.7 415.4 669.5 417.1 672.0 418.3 C674.5 419.5 677.3 421.6 680.0 422.8 C682.7 424.0 686.7 424.9 688.0 425.3" fill="none" stroke="#b04848" stroke-width="1.2"/>
<path d="M795.2 425.3 C795.6 421.9 796.8 410.6 797.8 404.6 C798.8 398.6 800.0 393.2 801.0 389.3 C802.0 385.4 802.5 381.3 803.5 381.5 C804.5 381.7 805.8 387.2 807.0 390.3 C808.2 393.4 809.3 396.5 810.6 400.3 C811.9 404.1 813.7 409.5 814.9 413.1 C816.1 416.7 817.1 419.8 818.0 421.8 C818.9 423.8 820.1 424.7 820.5 425.3 Z" fill="#cfc8df" fill-opacity="1.0" stroke="none"/>
<path d="M795.5 425.3 C796.1 423.6 797.7 418.2 799.0 415.3 C800.3 412.4 802.0 408.9 803.5 408.2 C805.0 407.5 806.2 409.4 808.0 411.3 C809.8 413.2 812.0 417.0 814.0 419.3 C816.0 421.6 819.0 424.3 820.0 425.3 Z" fill="#ecd4f0" fill-opacity="1.0" stroke="none"/>
<path d="M795.5 425.3 C796.1 423.6 797.7 418.2 799.0 415.3 C800.3 412.4 802.0 408.9 803.5 408.2 C805.0 407.5 806.2 409.4 808.0 411.3 C809.8 413.2 812.0 417.0 814.0 419.3 C816.0 421.6 819.0 424.3 820.0 425.3" fill="none" stroke="#8a52c0" stroke-width="1.4"/>
<path d="M796.0 425.3 C796.7 424.1 798.8 420.3 800.0 418.3 C801.2 416.3 802.0 413.3 803.5 413.1 C805.0 412.9 806.9 415.6 809.0 417.3 C811.1 419.0 814.2 422.0 816.0 423.3 C817.8 424.6 819.3 425.0 820.0 425.3 Z" fill="#f8cfc8" fill-opacity="1.0" stroke="none"/>
<path d="M796.0 425.3 C796.7 424.1 798.8 420.3 800.0 418.3 C801.2 416.3 802.0 413.3 803.5 413.1 C805.0 412.9 806.9 415.6 809.0 417.3 C811.1 419.0 814.2 422.0 816.0 423.3 C817.8 424.6 819.3 425.0 820.0 425.3" fill="none" stroke="#8a98d0" stroke-width="0.9"/>
<path d="M796.0 425.3 C796.7 424.6 798.8 422.6 800.0 421.3 C801.2 420.0 802.0 417.5 803.5 417.3 C805.0 417.1 806.9 419.1 809.0 420.3 C811.1 421.5 814.3 423.5 816.0 424.3 C817.7 425.1 818.5 425.1 819.0 425.3 Z" fill="#dcecd0" fill-opacity="1.0" stroke="none"/>
<path d="M796.0 425.3 C796.7 424.6 798.8 422.6 800.0 421.3 C801.2 420.0 802.0 417.5 803.5 417.3 C805.0 417.1 806.9 419.1 809.0 420.3 C811.1 421.5 814.3 423.5 816.0 424.3 C817.7 425.1 818.5 425.1 819.0 425.3" fill="none" stroke="#f0a060" stroke-width="1.0"/>
<path d="M832.3 425.3 C832.9 421.9 834.7 412.7 836.2 404.6 C837.7 396.5 839.4 385.3 841.5 376.8 C843.6 368.3 846.7 361.2 849.0 353.4 C851.3 345.6 853.8 334.7 855.4 329.9 C857.0 325.1 857.4 324.6 858.6 324.6 C859.8 324.6 861.2 325.8 862.8 329.9 C864.4 334.0 866.6 342.4 868.2 349.1 C869.8 355.9 871.0 361.9 872.4 370.4 C873.8 378.9 875.3 392.1 876.7 400.3 C878.1 408.5 879.8 415.3 881.0 419.5 C882.2 423.7 883.6 424.3 884.1 425.3 Z" fill="#cfc8df" fill-opacity="1.0" stroke="none"/>
<path d="M832.3 425.3 C833.6 422.9 837.6 414.6 840.4 411.0 C843.2 407.4 846.0 406.2 849.0 403.5 C852.0 400.8 855.8 395.7 858.6 395.0 C861.4 394.3 863.7 397.2 866.0 399.2 C868.3 401.1 870.3 403.3 872.4 406.7 C874.5 410.1 876.9 416.4 878.8 419.5 C880.6 422.6 882.7 424.3 883.5 425.3 Z" fill="#ecd4f0" fill-opacity="1.0" stroke="none"/>
<path d="M832.3 425.3 C833.6 422.9 837.6 414.6 840.4 411.0 C843.2 407.4 846.0 406.2 849.0 403.5 C852.0 400.8 855.8 395.7 858.6 395.0 C861.4 394.3 863.7 397.2 866.0 399.2 C868.3 401.1 870.3 403.3 872.4 406.7 C874.5 410.1 876.9 416.4 878.8 419.5 C880.6 422.6 882.7 424.3 883.5 425.3" fill="none" stroke="#8650c0" stroke-width="1.6"/>
<path d="M832.3 425.3 C834.0 424.2 838.2 420.8 842.6 418.4 C847.0 416.0 854.0 411.5 858.6 411.0 C863.2 410.5 866.8 413.1 870.3 415.2 C873.8 417.3 877.8 422.0 879.9 423.7 C882.0 425.4 882.5 425.0 883.0 425.3 Z" fill="#f8cfc8" fill-opacity="1.0" stroke="none"/>
<path d="M832.3 425.3 C834.0 424.2 838.2 420.8 842.6 418.4 C847.0 416.0 854.0 411.5 858.6 411.0 C863.2 410.5 866.8 413.1 870.3 415.2 C873.8 417.3 877.8 422.0 879.9 423.7 C882.0 425.4 882.5 425.0 883.0 425.3" fill="none" stroke="#8a98d0" stroke-width="1.0"/>
<path d="M882.0 425.3 C883.2 425.0 886.9 424.0 889.0 423.3 C891.1 422.6 893.0 421.2 894.8 421.2 C896.6 421.2 898.1 422.7 900.0 423.3 C901.9 423.9 899.0 424.5 906.0 424.8 C913.0 425.1 936.0 425.2 942.0 425.3" fill="none" stroke="#c8c0d8" stroke-width="1.0" stroke-opacity="1.0"/>
<path d="M884.0 425.3 C885.8 425.1 891.5 424.2 895.0 424.1 C898.5 424.0 903.3 424.8 905.0 424.9" fill="none" stroke="#7ab870" stroke-width="1.0" stroke-opacity="1.0"/>
</svg>
<div class="t" style="left:19.87px;top:316px;font-size:9.2px;color:#55595f;">4000000</div>
<div class="t" style="left:19.87px;top:342px;font-size:9.2px;color:#55595f;">3000000</div>
<div class="t" style="left:19.87px;top:368px;font-size:9.2px;color:#55595f;">2000000</div>
<div class="t" style="left:19.87px;top:394px;font-size:9.2px;color:#55595f;">1000000</div>
<div class="t" style="left:50.59px;top:420px;font-size:9.2px;color:#55595f;">0</div>
<div class="t" style="left:57.24px;top:432px;font-size:8.8px;color:#55595f;transform:scaleX(1.0400);transform-origin:0 0;">08:00</div>
<div class="t" style="left:93.96px;top:432px;font-size:8.8px;color:#55595f;transform:scaleX(1.0400);transform-origin:0 0;">09:00</div>
<div class="t" style="left:130.68px;top:432px;font-size:8.8px;color:#55595f;transform:scaleX(1.0400);transform-origin:0 0;">10:00</div>
<div class="t" style="left:167.74px;top:432px;font-size:8.8px;color:#55595f;transform:scaleX(1.0400);transform-origin:0 0;">11:00</div>
<div class="t" style="left:204.12px;top:432px;font-size:8.8px;color:#55595f;transform:scaleX(1.0400);transform-origin:0 0;">12:00</div>
<div class="t" style="left:240.84px;top:432px;font-size:8.8px;color:#55595f;transform:scaleX(1.0400);transform-origin:0 0;">13:00</div>
<div class="t" style="left:277.56px;top:432px;font-size:8.8px;color:#55595f;transform:scaleX(1.0400);transform-origin:0 0;">14:00</div>
<div class="t" style="left:314.28px;top:432px;font-size:8.8px;color:#55595f;transform:scaleX(1.0400);transform-origin:0 0;">15:00</div>
<div class="t" style="left:351.00px;top:432px;font-size:8.8px;color:#55595f;transform:scaleX(1.0400);transform-origin:0 0;">16:00</div>
<div class="t" style="left:387.72px;top:432px;font-size:8.8px;color:#55595f;transform:scaleX(1.0400);transform-origin:0 0;">17:00</div>
<div class="t" style="left:424.44px;top:432px;font-size:8.8px;color:#55595f;transform:scaleX(1.0400);transform-origin:0 0;">18:00</div>
<div class="t" style="left:461.16px;top:432px;font-size:8.8px;color:#55595f;transform:scaleX(1.0400);transform-origin:0 0;">19:00</div>
<div class="t" style="left:497.88px;top:432px;font-size:8.8px;color:#55595f;transform:scaleX(1.0400);transform-origin:0 0;">20:00</div>
<div class="t" style="left:534.60px;top:432px;font-size:8.8px;color:#55595f;transform:scaleX(1.0400);transform-origin:0 0;">21:00</div>
<div class="t" style="left:571.32px;top:432px;font-size:8.8px;color:#55595f;transform:scaleX(1.0400);transform-origin:0 0;">22:00</div>
<div class="t" style="left:608.04px;top:432px;font-size:8.8px;color:#55595f;transform:scaleX(1.0400);transform-origin:0 0;">23:00</div>
<div class="t" style="left:644.76px;top:432px;font-size:8.8px;color:#55595f;transform:scaleX(1.0400);transform-origin:0 0;">00:00</div>
<div class="t" style="left:681.48px;top:432px;font-size:8.8px;color:#55595f;transform:scaleX(1.0400);transform-origin:0 0;">01:00</div>
<div class="t" style="left:718.20px;top:432px;font-size:8.8px;color:#55595f;transform:scaleX(1.0400);transform-origin:0 0;">02:00</div>
<div class="t" style="left:754.92px;top:432px;font-size:8.8px;color:#55595f;transform:scaleX(1.0400);transform-origin:0 0;">03:00</div>
<div class="t" style="left:791.64px;top:432px;font-size:8.8px;color:#55595f;transform:scaleX(1.0400);transform-origin:0 0;">04:00</div>
<div class="t" style="left:828.36px;top:432px;font-size:8.8px;color:#55595f;transform:scaleX(1.0400);transform-origin:0 0;">05:00</div>
<div class="t" style="left:865.08px;top:432px;font-size:8.8px;color:#55595f;transform:scaleX(1.0400);transform-origin:0 0;">06:00</div>
<div class="t" style="left:901.80px;top:432px;font-size:8.8px;color:#55595f;transform:scaleX(1.0400);transform-origin:0 0;">07:00</div>
<div class="sep" style="left:20px;top:456.70px;width:928.90px"></div>
<div class="sep" style="left:20px;top:473.80px;width:928.90px"></div>
<div class="sep" style="left:20px;top:490.90px;width:928.90px"></div>
<div class="sep" style="left:20px;top:508.00px;width:928.90px"></div>
<div class="t" style="left:875.08px;top:445px;font-size:9.0px;color:#3a70de;transform:scaleX(0.9700);transform-origin:0 0;">Total</div>
<svg class="a" style="left:895.5px;top:446.5px" width="6" height="6" viewBox="0 0 6 6"><path d="M1.0 2.0 L3 4.0 L5.0 2.0" stroke="#3a70de" stroke-width="1.0" fill="none"/></svg>
<div class="t" style="left:920.97px;top:445px;font-size:9.0px;color:#3a70de;transform:scaleX(0.9700);transform-origin:0 0;">Mean</div>
<div class="sw" style="left:25.5px;top:464.75px;width:9.5px;background:#6e5ab0"></div>
<div class="t" style="left:40.50px;top:462px;font-size:9.2px;color:#4e5258;transform:scaleX(0.8121);transform-origin:0 0;">FRET</div>
<div class="t" style="left:864.48px;top:462px;font-size:9.2px;color:#4e5258;transform:scaleX(0.9800);transform-origin:0 0;">9946299</div>
<div class="t" style="left:910.47px;top:462px;font-size:9.2px;color:#4e5258;transform:scaleX(0.9200);transform-origin:0 0;">1105144</div>
<div class="sw" style="left:25.5px;top:481.85px;width:9.5px;background:#7ab870"></div>
<div class="t" style="left:40.50px;top:480px;font-size:9.2px;color:#4e5258;transform:scaleX(0.8556);transform-origin:0 0;">WALE</div>
<div class="t" style="left:864.48px;top:480px;font-size:9.2px;color:#4e5258;transform:scaleX(0.9800);transform-origin:0 0;">2802631</div>
<div class="t" style="left:917.74px;top:480px;font-size:9.2px;color:#4e5258;transform:scaleX(0.9800);transform-origin:0 0;">28893</div>
<div class="sw" style="left:25.5px;top:498.95px;width:9.5px;background:#e85a5a"></div>
<div class="t" style="left:40.50px;top:497px;font-size:9.2px;color:#4e5258;transform:scaleX(0.8406);transform-origin:0 0;">EKPO</div>
<div class="t" style="left:864.48px;top:497px;font-size:9.2px;color:#4e5258;transform:scaleX(0.9800);transform-origin:0 0;">2389542</div>
<div class="t" style="left:917.74px;top:497px;font-size:9.2px;color:#4e5258;transform:scaleX(0.9800);transform-origin:0 0;">24634</div>
</body></html>
